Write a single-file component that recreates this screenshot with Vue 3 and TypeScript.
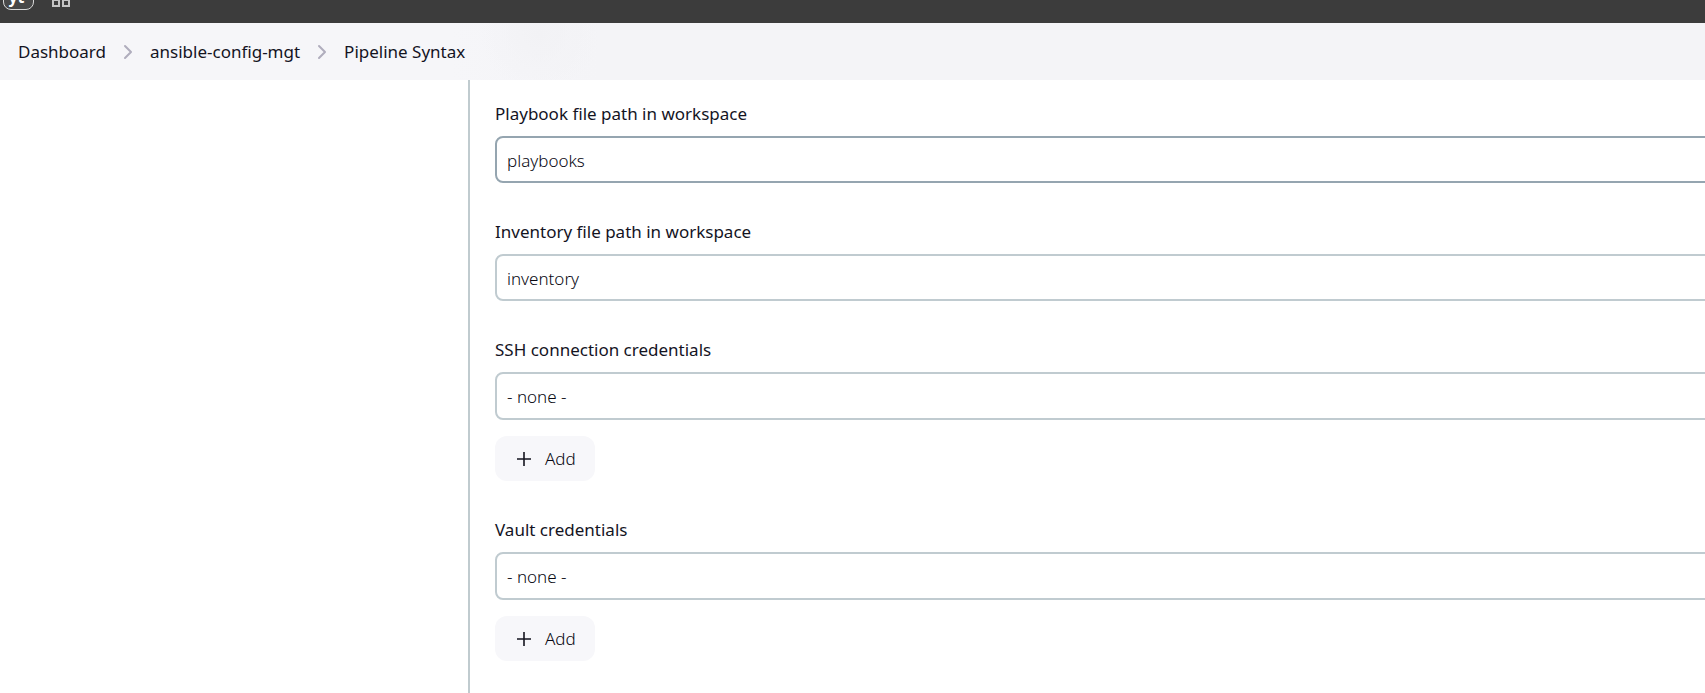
<script setup lang="ts">
import { ref } from 'vue'

interface Field {
  id: string
  label: string
  kind: 'text' | 'select'
  value: string
  active?: boolean
}

const crumbs: string[] = ['Dashboard', 'ansible-config-mgt', 'Pipeline Syntax']

const fields = ref<Field[]>([
  { id: 'playbook', label: 'Playbook file path in workspace', kind: 'text', value: 'playbooks', active: true },
  { id: 'inventory', label: 'Inventory file path in workspace', kind: 'text', value: 'inventory' },
  { id: 'ssh-credentials', label: 'SSH connection credentials', kind: 'select', value: '' },
  { id: 'vault-credentials', label: 'Vault credentials', kind: 'select', value: '' },
])
</script>

<template>
  <div class="page">
    <header class="topbar">
      <button type="button" class="logo">yt</button>
      <button type="button" class="apps" aria-label="Apps">
        <svg width="18" height="18" viewBox="0 0 18 18" fill="none" stroke="#c4c4c4" stroke-width="2">
          <rect x="1" y="1" width="6" height="6" />
          <rect x="11" y="1" width="6" height="6" />
          <rect x="1" y="11" width="6" height="6" />
          <rect x="11" y="11" width="6" height="6" />
        </svg>
      </button>
    </header>

    <nav class="breadcrumbs" aria-label="Breadcrumb">
      <template v-for="(crumb, i) in crumbs" :key="crumb">
        <svg v-if="i > 0" class="chevron" width="10" height="16" viewBox="0 0 10 16" fill="none">
          <path d="M2 2l6 6-6 6" stroke="#b0adbd" stroke-width="2" stroke-linecap="round" stroke-linejoin="round" />
        </svg>
        <a href="#" class="crumb">{{ crumb }}</a>
      </template>
    </nav>

    <div class="body">
      <aside class="side"></aside>
      <main class="form">
        <div v-for="field in fields" :key="field.id" class="field">
          <label :for="field.id" class="label">{{ field.label }}</label>
          <input
            v-if="field.kind === 'text'"
            :id="field.id"
            v-model="field.value"
            type="text"
            class="control"
            :class="{ active: field.active }"
          />
          <template v-else>
            <select :id="field.id" v-model="field.value" class="control select">
              <option value="">- none -</option>
            </select>
            <button type="button" class="add">
              <svg width="14" height="14" viewBox="0 0 14 14" fill="none">
                <path d="M7 0v14M0 7h14" stroke="#14141f" stroke-width="1.6" />
              </svg>
              Add
            </button>
          </template>
        </div>
      </main>
    </div>
  </div>
</template>

<style>
body {
  margin: 0;
  background: #fff;
}
</style>

<style scoped>
.page {
  display: flex;
  flex-direction: column;
  min-height: 100vh;
  overflow: hidden;
  color: #14141f;
  font-family: "Noto Sans", "Open Sans", sans-serif;
  font-size: 17px;
}

.topbar {
  display: flex;
  align-items: flex-end;
  gap: 18px;
  height: 23px;
  padding-left: 3px;
  overflow: hidden;
  box-sizing: border-box;
  background: #3c3c3c;
}

.logo {
  width: 31px;
  height: 30px;
  margin-bottom: 13px;
  padding: 4px 4px 0 0;
  flex: none;
  box-sizing: border-box;
  border: 1px solid #d8d8d8;
  border-radius: 8px;
  background: #484848;
  color: #fff;
  font: bold 16px/24px "Noto Sans", sans-serif;
}

.apps {
  display: flex;
  margin-bottom: 16px;
  padding: 0;
  border: 0;
  background: none;
}

.breadcrumbs {
  display: flex;
  align-items: center;
  gap: 17px;
  height: 57px;
  padding-left: 18px;
  background:
    radial-gradient(circle at 540px 10px, #f2f2f5 0, transparent 60px),
    linear-gradient(90deg, #f6f6f9 450px, #f4f4f7 600px);
}

.crumb {
  color: #14141f;
  line-height: 24px;
  text-decoration: none;
}

.chevron {
  flex: none;
}

.body {
  display: flex;
  flex: 1;
}

.side {
  width: 468px;
  flex: none;
  border-right: 2px solid #c0cbcf;
}

/* The form is wider than the viewport and runs past its right edge. */
.form {
  display: flex;
  flex: 1;
  flex-direction: column;
  gap: 37px;
  margin-right: -40px;
  padding: 22px 0 24px 25px;
}

.field {
  display: flex;
  flex-direction: column;
  align-items: flex-start;
}

.label {
  margin-bottom: 10px;
  line-height: 24px;
}

.control {
  width: 100%;
  height: 47px;
  padding: 2px 10px 0;
  box-sizing: border-box;
  border: 2px solid #c0cbd0;
  border-radius: 8px;
  outline: none;
  background: #fff;
  color: #080812;
  font: inherit;
  font-weight: 300;
}

.control.active {
  border-color: #95a5b0;
}

.select {
  height: 48px;
  padding-top: 0;
  appearance: none;
}

.add {
  display: flex;
  align-items: center;
  gap: 14px;
  height: 45px;
  margin-top: 16px;
  padding: 0 19px 0 22px;
  border: 0;
  border-radius: 12px;
  background: #f7f7fa;
  color: #080812;
  font: inherit;
  font-weight: 300;
}
</style>
